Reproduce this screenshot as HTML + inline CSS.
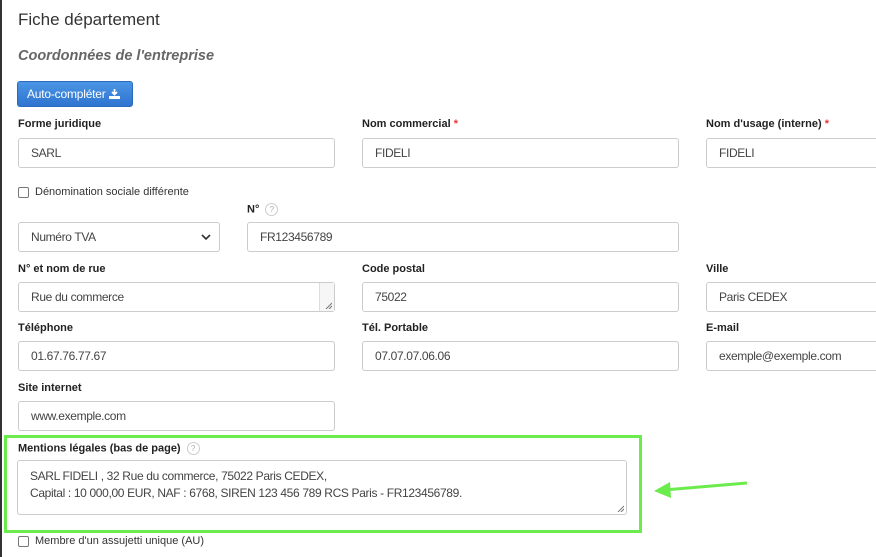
<!DOCTYPE html>
<html><head><meta charset="utf-8"><style>
*{box-sizing:border-box}
body{margin:0;width:876px;height:557px;overflow:hidden;background:#fff;font-family:"Liberation Sans",Arial,sans-serif;color:#333;position:relative}
.a{position:absolute}
.lb{position:absolute;font-size:11px;font-weight:bold;color:#222}
.in{position:absolute;height:30px;border:1px solid #ccc;border-radius:3px;font-size:12px;letter-spacing:-0.35px;color:#444;padding:0 12px;line-height:28px;background:#fff}
.req{color:#e33}
.q{display:inline-block;width:13px;height:13px;border:1px solid #ccc;border-radius:50%;font-size:8px;color:#aaa;text-align:center;line-height:11px;font-weight:normal;vertical-align:middle;margin-left:3px}
.cb{position:absolute;width:11px;height:11px;border:1px solid #777;border-radius:2px;background:#fff}
.ct{position:absolute;font-size:11px;color:#333}
</style></head><body>
<div class="a" style="left:0;top:0;width:2px;height:557px;background:#333"></div>
<div class="a" style="left:18px;top:10px;font-size:17px;color:#333">Fiche département</div>
<div class="a" style="left:18px;top:48px;font-size:14.5px;font-weight:bold;font-style:italic;color:#666">Coordonnées de l'entreprise</div>
<div class="a" style="left:17px;top:81px;width:116px;height:26px;border-radius:3px;background:linear-gradient(#4a95e4,#2f74d0);border:1px solid #2a6ac0;color:#fff;font-size:12px;letter-spacing:-0.2px;line-height:24px;padding-left:9px">Auto-compléter <svg width="11" height="10" viewBox="0 0 11 10" style="vertical-align:-1px"><path d="M5.5 0v5M3 3l2.5 2.5L8 3" stroke="#fff" stroke-width="1.8" fill="none"/><rect x="0" y="7" width="11" height="3" fill="#fff"/></svg></div>

<div class="lb" style="left:18px;top:118px">Forme juridique</div>
<div class="lb" style="left:362px;top:118px">Nom commercial <span class="req">*</span></div>
<div class="lb" style="left:706px;top:118px">Nom d'usage (interne) <span class="req">*</span></div>
<div class="in" style="left:18px;top:138px;width:317px">SARL</div>
<div class="in" style="left:362px;top:138px;width:317px">FIDELI</div>
<div class="in" style="left:706px;top:138px;width:190px">FIDELI</div>

<div class="cb" style="left:18px;top:187px"></div>
<div class="ct" style="left:35px;top:186px">Dénomination sociale différente</div>

<div class="lb" style="left:247px;top:203px">N° <span class="q">?</span></div>
<div class="in" style="left:18px;top:222px;width:202px">Numéro TVA<svg class="a" style="right:8px;top:11px" width="10" height="7" viewBox="0 0 10 7"><path d="M1 1l4 4 4-4" stroke="#333" stroke-width="1.6" fill="none"/></svg></div>
<div class="in" style="left:247px;top:222px;width:432px">FR123456789</div>

<div class="lb" style="left:18px;top:263px">N° et nom de rue</div>
<div class="lb" style="left:362px;top:263px">Code postal</div>
<div class="lb" style="left:706px;top:263px">Ville</div>
<div class="in" style="left:18px;top:282px;width:317px">Rue du commerce<div class="a" style="right:0;top:0;width:15px;height:28px;border-left:1px solid #ddd;background:#f6f6f6"></div><svg class="a" style="right:2px;bottom:2px" width="7" height="7"><path d="M1 7L7 1M4 7L7 4" stroke="#777"/></svg></div>
<div class="in" style="left:362px;top:282px;width:317px">75022</div>
<div class="in" style="left:706px;top:282px;width:190px">Paris CEDEX</div>

<div class="lb" style="left:18px;top:322px">Téléphone</div>
<div class="lb" style="left:362px;top:322px">Tél. Portable</div>
<div class="lb" style="left:706px;top:322px">E-mail</div>
<div class="in" style="left:18px;top:341px;width:317px">01.67.76.77.67</div>
<div class="in" style="left:362px;top:341px;width:317px">07.07.07.06.06</div>
<div class="in" style="left:706px;top:341px;width:190px">exemple@exemple.com</div>

<div class="lb" style="left:18px;top:382px">Site internet</div>
<div class="in" style="left:18px;top:401px;width:317px">www.exemple.com</div>

<div class="a" style="left:4px;top:435px;width:638px;height:98px;border:3px solid #6ceb4c"></div>
<div class="lb" style="left:18px;top:442px">Mentions légales (bas de page) <span class="q">?</span></div>
<div class="in" style="left:17px;top:460px;width:610px;height:55px;line-height:17px;padding-top:7px">SARL FIDELI , 32 Rue du commerce, 75022 Paris CEDEX,<br>Capital : 10 000,00 EUR, NAF : 6768, SIREN 123 456 789 RCS Paris - FR123456789.<svg class="a" style="right:2px;bottom:2px" width="7" height="7"><path d="M1 7L7 1M4 7L7 4" stroke="#777"/></svg></div>
<svg class="a" style="left:650px;top:474px" width="100" height="26"><path d="M97 9L14 16" stroke="#6ceb4c" stroke-width="3"/><path d="M4 17L20 8L21 24Z" fill="#6ceb4c"/></svg>

<div class="cb" style="left:18px;top:536px"></div>
<div class="ct" style="left:35px;top:535px">Membre d'un assujetti unique (AU)</div>
</body></html>
